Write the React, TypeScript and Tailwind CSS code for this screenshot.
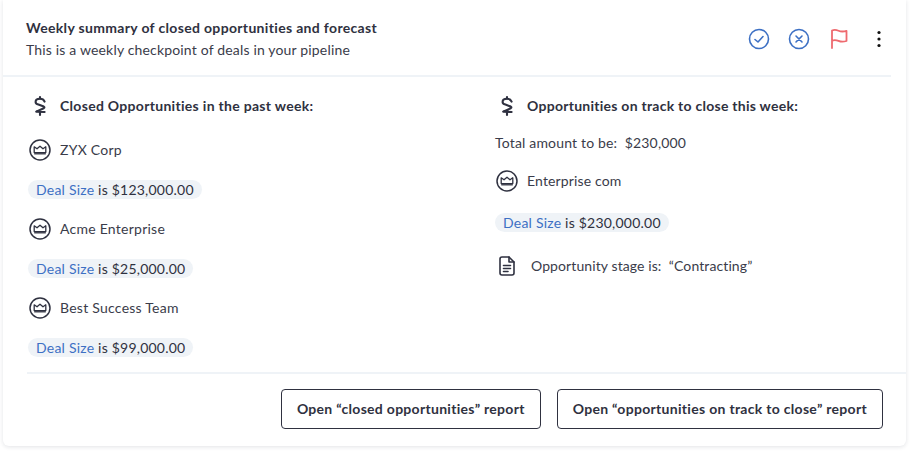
import React from "react";

function Dollar() {
  return (
    <svg width="14" height="22" viewBox="0 0 14 22" fill="none" stroke="#2f3140" strokeWidth="2.1" strokeLinecap="round" strokeLinejoin="round" className="shrink-0">
      <path d="M7 2V3.6" />
      <path d="M11.6 6.6C10.8 4.6 9 3.8 7 3.8C4.4 3.8 2.6 5.2 2.6 6.9C2.6 8.4 3.8 9.1 5.4 9.6L10.8 11.6C11.6 12 11.6 12.7 10.8 13.2L3.2 16.6L11.6 17" />
      <path d="M7 17.6V20" />
    </svg>
  );
}

function Crown() {
  return (
    <svg width="22" height="22" viewBox="0 0 22 22" fill="none" stroke="#2f3140" strokeLinejoin="round" className="shrink-0">
      <circle cx="11" cy="11" r="10" strokeWidth="1.5" />
      <path d="M5.2 7.8L8 9.8L11 7.2L14 9.8L16.8 7.8V13.6H5.2V7.8Z" strokeWidth="1.3" />
      <path d="M5.2 14.8H16.8" strokeWidth="1.3" />
    </svg>
  );
}

function Doc() {
  return (
    <svg width="16" height="20" viewBox="0 0 16 20" fill="none" stroke="#2f3140" strokeWidth="1.6" strokeLinecap="round" strokeLinejoin="round" className="shrink-0">
      <path d="M10 1H3C1.9 1 1 1.9 1 3V17C1 18.1 1.9 19 3 19H13C14.1 19 15 18.1 15 17V6L10 1Z" />
      <path d="M10 1V6H15" />
      <path d="M4.5 9.5H11.5M4.5 12.5H11.5M4.5 15.5H9" />
    </svg>
  );
}

function Pill({ value }: { value: string }) {
  return (
    <div className="flex h-[19px] w-fit items-center rounded-full bg-[#eff3f7] px-2 text-sm tracking-[0.22px] text-[#2f3140]">
      <span className="text-[#3d70c4]">Deal Size</span>
      <span>&nbsp;is {value}</span>
    </div>
  );
}

function Company({ name, value }: { name: string; value: string }) {
  return (
    <div className="flex flex-col gap-[19px]">
      <div className="flex h-[22px] items-center gap-[9px] pl-[2px] text-sm tracking-[0.25px] text-[#3a3c4a]">
        <Crown />
        <span>{name}</span>
      </div>
      <div className="ml-px">
        <Pill value={value} />
      </div>
    </div>
  );
}

export default function App() {
  return (
    <div className="h-[451px] w-[911px] bg-white pl-[3px] pr-[5px] text-[#2f3140]" style={{ fontFamily: '"Lato", "Noto Sans", sans-serif' }}>
      <div className="flex h-[446px] w-[903px] flex-col rounded-b-md bg-white shadow-[0_1px_4px_rgba(30,40,60,0.13)]">
        <header className="mr-[15px] flex h-[77px] items-start justify-between border-b-2 border-[#eff3f7] pl-[23px] pr-[1px] pt-[18px]">
          <div className="flex flex-col gap-[2px]">
            <h1 className="text-sm leading-[20px] font-bold tracking-[0.33px]">Weekly summary of closed opportunities and forecast</h1>
            <p className="text-sm leading-[20px] tracking-[0.17px] text-[#3a3c4a]">This is a weekly checkpoint of deals in your pipeline</p>
          </div>
          <div className="mt-[10px] flex items-center gap-[18px]">
            <svg width="22" height="22" viewBox="0 0 22 22" fill="none" stroke="#3d70c4" strokeWidth="1.6" strokeLinecap="round" strokeLinejoin="round">
              <circle cx="11" cy="11" r="9.5" />
              <path d="M7 11.5L10 14L15 8.5" />
            </svg>
            <svg width="22" height="22" viewBox="0 0 22 22" fill="none" stroke="#3d70c4" strokeWidth="1.6" strokeLinecap="round">
              <circle cx="11" cy="11" r="9.5" />
              <path d="M8 8L14 14M14 8L8 14" />
            </svg>
            <svg width="20" height="22" viewBox="0 0 20 22" fill="none" stroke="#ee6a6f" strokeWidth="1.8" strokeLinecap="round" strokeLinejoin="round">
              <path d="M4 20V2.5C6 1.5 8 1.6 10.5 2.7C13 3.8 15.5 3.8 18.5 2.8V13C15.5 14 13 14 10.5 12.9C8 11.8 6 11.7 4 12.7" />
            </svg>
            <svg width="22" height="22" viewBox="0 0 22 22" fill="#111" className="ml-[2px]">
              <circle cx="11" cy="4.5" r="1.6" />
              <circle cx="11" cy="11" r="1.6" />
              <circle cx="11" cy="17.5" r="1.6" />
            </svg>
          </div>
        </header>

        <main className="flex flex-1 pl-[24px]">
          <section className="flex w-[468px] flex-col gap-[19px] pt-[17px]">
            <div className="flex h-[24px] items-center gap-[13px] pl-[6px] text-sm font-bold tracking-[0.3px]">
              <Dollar />
              <span>Closed Opportunities in the past week:</span>
            </div>
            <div className="flex flex-col gap-[19px] pt-[2px]">
              <Company name="ZYX Corp" value="$123,000.00" />
              <Company name="Acme Enterprise" value="$25,000.00" />
              <Company name="Best Success Team" value="$99,000.00" />
            </div>
          </section>
          <section className="flex flex-col pt-[17px]">
            <div className="flex h-[24px] items-center gap-[13px] pl-[5px] text-sm font-bold tracking-[0.26px]">
              <Dollar />
              <span>Opportunities on track to close this week:</span>
            </div>
            <p className="mt-[15px] text-sm leading-[20px] tracking-[0.17px] text-[#3a3c4a]">Total amount to be:&nbsp; $230,000</p>
            <div className="mt-[17px] flex h-[22px] items-center gap-[9px] pl-[1px] text-sm tracking-[0.15px] text-[#3a3c4a]">
              <Crown />
              <span>Enterprise com</span>
            </div>
            <div className="mt-[21px]">
              <Pill value="$230,000.00" />
            </div>
            <div className="mt-[23px] flex h-[22px] items-center gap-[16px] pl-[4px] text-sm tracking-[0.1px] text-[#3a3c4a]">
              <Doc />
              <span>Opportunity stage is:&nbsp; “Contracting”</span>
            </div>
          </section>
        </main>

        <footer className="ml-[24px] flex h-[74px] items-start justify-end gap-[16px] border-t-2 border-[#eff3f7] pr-[23px] pt-[15px]">
          <button className="h-[40px] rounded border border-[#2f3140] px-[15px] text-sm font-bold tracking-[0.29px]">Open “closed opportunities” report</button>
          <button className="h-[40px] rounded border border-[#2f3140] px-[15px] text-sm font-bold tracking-[0.3px]">Open “opportunities on track to close” report</button>
        </footer>
      </div>
    </div>
  );
}
